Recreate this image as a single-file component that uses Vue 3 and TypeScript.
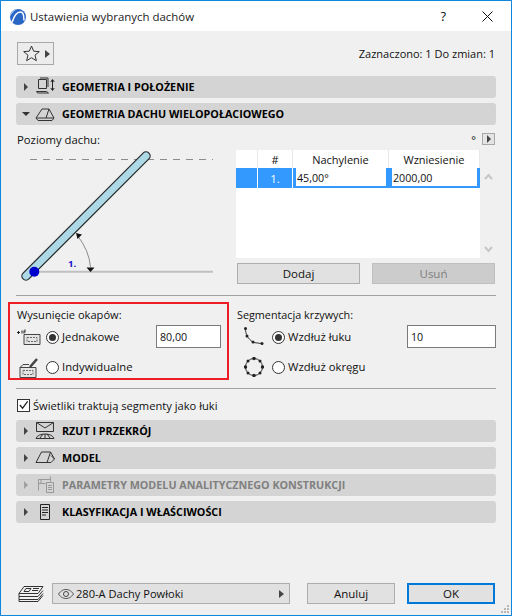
<template>
  <div class="window">
    <header class="titlebar">
      <svg class="logo" width="16" height="16" viewBox="0 0 16 16">
        <circle cx="8" cy="8" r="8" fill="#2a66c4" />
        <path d="M0 8a8 8 0 0 1 8-8C4.500 1 1.500 4 0 8z" fill="#a5c9f0" />
        <path d="M2 13.500C4 7 7.500 3 10.500 3c2.500 0 3.500 3.500 3.500 8.500" fill="none" stroke="#fff" stroke-width="1.500" />
      </svg>
      <span class="title">Ustawienia wybranych dachów</span>
      <span class="help">?</span>
      <svg class="close" width="11" height="11" viewBox="0 0 11 11">
        <path d="M.5.5l10 10M10.500.5l-10 10" stroke="#111" fill="none" />
      </svg>
    </header>

    <main class="body">
      <div class="top-row">
        <button class="fav">
          <svg width="17" height="17" viewBox="0 0 17 17">
            <path d="M8.500 1l2.200 5.200 5.600.4-4.300 3.600 1.400 5.500-4.900-3-4.900 3 1.400-5.500L.7 6.600l5.600-.4z" fill="none" stroke="#333" />
          </svg>
          <i class="tri-right"></i>
        </button>
        <span class="selection">Zaznaczono: 1 Do zmian: 1</span>
      </div>

      <div class="section first">
        <i class="tri-right small"></i>
        <svg class="sec-icon" width="20" height="20" viewBox="0 0 20 20">
          <path d="M3.500 2.500h8v9h-8zM5 1h8v9M1.500 14.500h10l2 1.500h-11z" fill="none" stroke="#333" />
          <path d="M17.500 3v10M15.800 5l1.700-2.500L19.200 5M15.800 11l1.700 2.500 1.700-2.500" fill="none" stroke="#222" />
        </svg>
        <span>GEOMETRIA I POŁOŻENIE</span>
      </div>
      <div class="section">
        <i class="tri-down"></i>
        <svg class="sec-icon" width="20" height="20" viewBox="0 0 20 20">
          <path d="M1 14l6-9h7l5 9zM1 14l2 2.500h14l2-2.500M14 5l-3 9" fill="none" stroke="#333" />
        </svg>
        <span>GEOMETRIA DACHU WIELOPOŁACIOWEGO</span>
      </div>

      <div class="roof-row">
        <div class="roof-left">
          <div class="roof-label">Poziomy dachu:</div>
          <svg width="210" height="140" viewBox="0 0 210 140" class="diagram">
            <path d="M14 11.500h183" stroke="#8c8c8c" stroke-dasharray="7 6" fill="none" />
            <path d="M20 123.700h177" stroke="#c0c0c0" stroke-width="2" fill="none" />
            <path d="M10 128L130 8" stroke="#2b2b2b" stroke-width="9.500" stroke-linecap="round" />
            <path d="M10 128L130 8" stroke="#add8e6" stroke-width="7" stroke-linecap="round" />
            <circle cx="18.300" cy="123.700" r="5" fill="#0000cd" />
            <path d="M61 87Q73 102 74.500 119" stroke="#8a8a8a" fill="none" />
            <path d="M60 85l6 1.500-4.500 4.500z M70.500 119.500h8l-4 4.500z" fill="#111" />
            <text x="52" y="119" class="level">1.</text>
          </svg>
        </div>
        <div class="roof-right">
          <div class="unit-row">
            <span class="deg">°</span>
            <button class="mini"><i class="tri-right small"></i></button>
          </div>
          <div class="table-wrap">
            <div class="table">
              <div class="head cell"></div>
              <div class="head cell">#</div>
              <div class="head cell">Nachylenie</div>
              <div class="head cell">Wzniesienie</div>
              <div class="sel"></div>
              <div class="sel num">1.</div>
              <div class="sel edit"><span>45,00°</span></div>
              <div class="sel edit"><span>2000,00</span></div>
            </div>
            <div class="scroll">
              <svg width="9" height="7" viewBox="0 0 9 7"><path d="M1 6l3.500-4L8 6" fill="none" stroke="#c6c6c6" stroke-width="2" /></svg>
              <svg width="9" height="7" viewBox="0 0 9 7"><path d="M1 1l3.500 4L8 1" fill="none" stroke="#c6c6c6" stroke-width="2" /></svg>
            </div>
          </div>
          <div class="btn-row">
            <button class="btn">Dodaj</button>
            <button class="btn off">Usuń</button>
          </div>
        </div>
      </div>

      <hr />

      <div class="options">
        <div class="hl"></div>
        <div class="opt-col left">
          <div class="opt-label">Wysunięcie okapów:</div>
          <div class="opt-line one">
            <svg width="24" height="16" viewBox="0 0 24 16" class="opt-icon">
              <path d="M7 5.500h16v10H7z" fill="#e4e4e4" stroke="#444" />
              <path d="M10 8.500h10v4H10z" fill="none" stroke="#666" stroke-dasharray="2 1" />
              <path d="M0 3.500h3M1.500 2v3M5 1.500v3M7 1.500v3M8 .5v3" stroke="#222" fill="none" />
            </svg>
            <span class="radio on"></span>
            <span class="radio-text">Jednakowe</span>
            <input class="num-input w1" value="80,00" />
          </div>
          <div class="opt-line two">
            <svg width="24" height="21" viewBox="0 0 24 21" class="opt-icon">
              <path d="M3 10.500h16v10H3zM3 10.500l3-3h6" fill="#e4e4e4" stroke="#444" />
              <path d="M6 13.500h10v4H6z" fill="none" stroke="#666" stroke-dasharray="2 1" />
              <path d="M13 10l7-8" stroke="#444" stroke-width="2.500" />
            </svg>
            <span class="radio"></span>
            <span class="radio-text">Indywidualne</span>
          </div>
        </div>
        <div class="opt-col right">
          <div class="opt-label seg">Segmentacja krzywych:</div>
          <div class="opt-line one">
            <svg width="20" height="20" viewBox="0 0 20 20" class="seg-icon">
              <path d="M1.500 1.500c0 6 2 10 8 14l8 1" fill="none" stroke="#333" />
              <g fill="#222"><circle cx="1.500" cy="1.500" r="1.500" /><circle cx="3" cy="9" r="1.500" /><circle cx="9" cy="15" r="1.500" /><circle cx="18" cy="16.500" r="1.500" /></g>
            </svg>
            <span class="radio on"></span>
            <span class="radio-text">Wzdłuż łuku</span>
            <input class="num-input w2" value="10" />
          </div>
          <div class="opt-line two">
            <svg width="20" height="20" viewBox="0 0 20 20" class="seg-icon">
              <circle cx="10" cy="10" r="8.500" fill="none" stroke="#333" />
              <g fill="#222"><circle cx="10" cy="1.500" r="1.700" /><circle cx="10" cy="18.500" r="1.700" /><circle cx="1.500" cy="10" r="1.700" /><circle cx="18.500" cy="10" r="1.700" /><circle cx="4" cy="4" r="1.500" /><circle cx="16" cy="4" r="1.500" /><circle cx="4" cy="16" r="1.500" /><circle cx="16" cy="16" r="1.500" /></g>
            </svg>
            <span class="radio"></span>
            <span class="radio-text">Wzdłuż okręgu</span>
          </div>
        </div>
      </div>

      <hr />

      <label class="check-row">
        <span class="check">
          <svg width="12" height="12" viewBox="0 0 12 12"><path d="M2 6l3 3.500L10.500 2" fill="none" stroke="#222" stroke-width="1.300" /></svg>
        </span>
        Świetliki traktują segmenty jako łuki
      </label>

      <div class="section s3">
        <i class="tri-right small"></i>
        <svg class="sec-icon" width="20" height="20" viewBox="0 0 20 20">
          <path d="M1.500 1.500h17v9h-17zM1.500 1.500L10 7l8.500-5.500M1 17.500c2-6 16-6 18 0zM5 17l3-4M15 17l-3-4M10 13v4" fill="none" stroke="#333" />
        </svg>
        <span>RZUT I PRZEKRÓJ</span>
      </div>
      <div class="section">
        <i class="tri-right small"></i>
        <svg class="sec-icon" width="20" height="20" viewBox="0 0 20 20">
          <path d="M1 14.500L6.500 4h9l4 7-3.500 3.500zM15.500 4L12 14.500M16 7.500l3.500 3.500" fill="none" stroke="#333" />
        </svg>
        <span>MODEL</span>
      </div>
      <div class="section dim">
        <i class="tri-right small"></i>
        <svg class="sec-icon" width="20" height="20" viewBox="0 0 20 20">
          <path d="M3.500 4.500h12M3.500 4.500v11M15.500 1.500v5M3.500 8.500h7M6 4.500v4" fill="none" stroke="#999" />
          <path d="M11.500 7.500h7v10h-7zM13 10.500h4M13 12.500h4M13 14.500h4" fill="#d4d4d4" stroke="#999" />
        </svg>
        <span>PARAMETRY MODELU ANALITYCZNEGO KONSTRUKCJI</span>
      </div>
      <div class="section">
        <i class="tri-right small"></i>
        <svg class="sec-icon" width="20" height="20" viewBox="0 0 20 20">
          <path d="M5.500 2.500h9v15h-9z" fill="none" stroke="#222" />
          <path d="M7 5.500h6M7 8h6M7 10.500h6M7 13h4" stroke="#222" fill="none" />
        </svg>
        <span>KLASYFIKACJA I WŁAŚCIWOŚCI</span>
      </div>

      <footer class="footer">
        <svg width="26" height="18" viewBox="0 0 26 18" class="layers">
          <path d="M6 1.500h19l-5 7H1zM1 8.500v3h19l5-6M1 11.500v3h19l5-6M1 14.500v2h19l5-6" fill="none" stroke="#333" />
          <path d="M8 3.500h5l-2 3H6zM15 3.500h6M14 5.500h6" fill="none" stroke="#333" />
        </svg>
        <div class="select">
          <svg width="16" height="10" viewBox="0 0 16 10">
            <path d="M.5 5C3 1.500 5.500.5 8 .5s5 1 7.500 4.500C13 8.500 10.500 9.500 8 9.500S3 8.500.5 5z" fill="none" stroke="#555" />
            <circle cx="8" cy="5" r="2.500" fill="none" stroke="#444" />
          </svg>
          <span class="select-text">280-A Dachy Powłoki</span>
          <i class="tri-right"></i>
        </div>
        <button class="btn cancel">Anuluj</button>
        <button class="btn ok">OK</button>
      </footer>
    </main>

    <svg class="grip" width="8" height="9" viewBox="0 0 8 9">
      <path d="M6 0h2v2H6zM3 3h2v2H3zM6 3h2v2H6zM0 6h2v2H0zM3 6h2v2H3zM6 6h2v2H6z" fill="#b8b8b8" />
    </svg>
  </div>
</template>

<script setup lang="ts">
</script>

<style>
html,
body {
  margin: 0;
  background: #f0f0f0;
}
</style>

<style scoped>
.window {
  position: relative;
  width: 512px;
  height: 616px;
  box-sizing: border-box;
  border: 1px solid #0f87e0;
  background: #f0f0f0;
  display: flex;
  flex-direction: column;
  font-family: "Open Sans", "Noto Sans", sans-serif;
  font-size: 11.3px;
  color: #111;
  overflow: hidden;
}

button,
input {
  font: inherit;
  color: inherit;
}

.titlebar {
  height: 30px;
  flex: none;
  background: #fff;
  display: flex;
  align-items: center;
}

.logo {
  margin-left: 9px;
  margin-top: 1px;
}

.title {
  margin-left: 4px;
  font-size: 11.45px;
  color: #222;
}

.help {
  margin-left: auto;
  font-size: 13px;
  margin-right: 36px;
}

.close {
  margin-right: 18px;
}

.body {
  flex: 1;
  display: flex;
  flex-direction: column;
  padding: 0 15px;
}

.top-row {
  margin-top: 11px;
  height: 23px;
  display: flex;
  justify-content: space-between;
  align-items: center;
}

.selection {
  font-size: 11px;
  margin-right: 1px;
}

.fav {
  margin: 0 0 0 1px;
  width: 37px;
  height: 23px;
  padding: 0 0 0 5px;
  box-sizing: border-box;
  border: 1px solid #a8a8a8;
  background: #ececec;
  display: flex;
  align-items: center;
  gap: 5px;
}

.tri-right {
  display: block;
  width: 0;
  height: 0;
  border-left: 5px solid #444;
  border-top: 4.5px solid transparent;
  border-bottom: 4.5px solid transparent;
}

.tri-right.small {
  border-left-width: 4px;
  border-top-width: 4px;
  border-bottom-width: 4px;
}

.tri-down {
  display: block;
  width: 0;
  height: 0;
  border-top: 4px solid #333;
  border-left: 4px solid transparent;
  border-right: 4px solid transparent;
  margin-left: -2px;
}

.section {
  height: 22px;
  margin-top: 5px;
  flex: none;
  background: #d4d4d4;
  border-radius: 3px;
  display: flex;
  align-items: center;
  padding-left: 8px;
  font-weight: 700;
  font-size: 10.75px;
  color: #000;
}

.section span {
  margin-top: -1px;
}

.section.first {
  margin-top: 11px;
}

.section.s3 {
  margin-top: 7px;
}

.section.dim {
  color: #808080;
}

.section.dim .tri-right {
  border-left-color: #a0a0a0;
}

.sec-icon {
  margin-left: 7px;
  margin-right: 7px;
}

.section .tri-down + .sec-icon {
  margin-left: 5px;
}

.roof-row {
  height: 170px;
  flex: none;
  display: flex;
  justify-content: space-between;
}

.roof-left {
  width: 218px;
}

.roof-label {
  margin-top: 7px;
  margin-left: 1px;
  height: 16px;
  line-height: 16px;
}

.diagram {
  display: block;
}

.level {
  fill: #1414d0;
  font-size: 9.5px;
  font-weight: 700;
}

.roof-right {
  width: 260px;
  padding-top: 8px;
  box-sizing: border-box;
}

.unit-row {
  height: 12px;
  padding-right: 1px;
  display: flex;
  justify-content: flex-end;
  align-items: center;
  gap: 6px;
}

.deg {
  font-size: 11px;
}

.mini {
  width: 13px;
  height: 12px;
  padding: 0;
  border: 1px solid #a8a8a8;
  background: #e4e4e4;
  display: flex;
  align-items: center;
  justify-content: center;
}

.table-wrap {
  margin-top: 5px;
  display: flex;
}

.table {
  width: 244px;
  height: 108px;
  background: #fff;
  display: grid;
  grid-template-columns: 22px 35px 96px 91px;
  grid-template-rows: 18px 20px;
  align-content: start;
}

.cell {
  display: flex;
  align-items: center;
  justify-content: center;
  border-right: 1px solid #e8e8e8;
  box-sizing: border-box;
  font-size: 11px;
}

.sel {
  background: #3399ff;
  border-right: 1px solid #fff;
}

.sel.num {
  color: #fff;
  display: flex;
  align-items: center;
  justify-content: center;
}

.sel.edit {
  border-right: 0;
  padding: 0 3px 2px 3px;
}

.sel.edit span {
  display: block;
  height: 100%;
  padding-left: 1px;
  background: #fff;
  line-height: 20px;
  font-size: 10.7px;
}

.scroll {
  width: 16px;
  height: 108px;
  padding: 23px 0 5px;
  box-sizing: border-box;
  display: flex;
  flex-direction: column;
  justify-content: space-between;
  align-items: center;
}

.btn-row {
  margin-top: 5px;
  display: flex;
  justify-content: space-between;
  padding: 0 1px;
}

.btn {
  height: 21px;
  width: 123px;
  padding: 0 0 1px;
  box-sizing: border-box;
  border: 1px solid #adadad;
  background: #e1e1e1;
  font-size: 11.5px;
}

.btn.off {
  background: #cccccc;
  color: #808080;
  border-color: #bfbfbf;
}

hr {
  margin: 0;
  height: 1px;
  flex: none;
  border: 0;
  background: #a0a0a0;
}

.options {
  position: relative;
  height: 92px;
  flex: none;
  display: flex;
}

.hl {
  position: absolute;
  left: -8px;
  top: 6px;
  width: 221px;
  height: 78px;
  box-sizing: border-box;
  border: 2px solid #ee1c25;
  pointer-events: none;
}

.opt-col {
  position: relative;
}

.opt-col.left {
  width: 220px;
  padding-left: 1px;
}

.opt-col.right {
  flex: 1;
}

.opt-label {
  margin-top: 11px;
  height: 16px;
  line-height: 16px;
  font-size: 11.1px;
}

.opt-label.seg {
  font-size: 10.8px;
}

.opt-line {
  display: flex;
  align-items: center;
  height: 24px;
}

.opt-line.one {
  margin-top: 2px;
}

.opt-line.two {
  margin-top: 6px;
}

.opt-icon {
  flex: none;
  width: 24px;
  margin-right: 5px;
}

.seg-icon {
  flex: none;
  margin: 0 8px 0 7px;
}

.radio {
  flex: none;
  width: 13px;
  height: 13px;
  box-sizing: border-box;
  border: 1px solid #333;
  border-radius: 50%;
  background: #fff;
  position: relative;
  margin-right: 3px;
}

.radio.on::after {
  content: "";
  position: absolute;
  left: 2px;
  top: 2px;
  width: 7px;
  height: 7px;
  border-radius: 50%;
  background: #333;
}

.radio-text {
  white-space: nowrap;
  margin-bottom: 2px;
}

.num-input {
  box-sizing: border-box;
  height: 23px;
  border: 1px solid #7a7a7a;
  background: #fff;
  padding: 0 3px;
  outline: 0;
  font-size: 10.7px;
  position: absolute;
  top: 29px;
}

.num-input.w1 {
  left: 140px;
  width: 65px;
}

.num-input.w2 {
  left: 170px;
  width: 89px;
}

.check-row {
  height: 16px;
  margin-top: 8px;
  display: flex;
  align-items: center;
  gap: 3px;
  padding-left: 1px;
  font-size: 11.15px;
}

.check {
  width: 13px;
  height: 13px;
  box-sizing: border-box;
  border: 1px solid #333;
  background: #fff;
  display: flex;
  align-items: center;
  justify-content: center;
}

.footer {
  margin-top: auto;
  margin-bottom: 11px;
  display: flex;
  align-items: center;
  height: 21px;
  padding-left: 2px;
}

.layers {
  flex: none;
}

.select {
  margin-left: 8px;
  width: 238px;
  height: 21px;
  box-sizing: border-box;
  border: 1px solid #adadad;
  background: #e1e1e1;
  display: flex;
  align-items: center;
  padding: 0 5px;
  font-size: 11.1px;
}

.select-text {
  flex: 1;
  margin-left: 2px;
}

.cancel {
  margin-left: 17px;
  width: 88px;
}

.ok {
  margin-left: 12px;
  width: 88px;
  border: 2px solid #0078d7;
}

.grip {
  position: absolute;
  right: 2px;
  bottom: 1px;
}
</style>
